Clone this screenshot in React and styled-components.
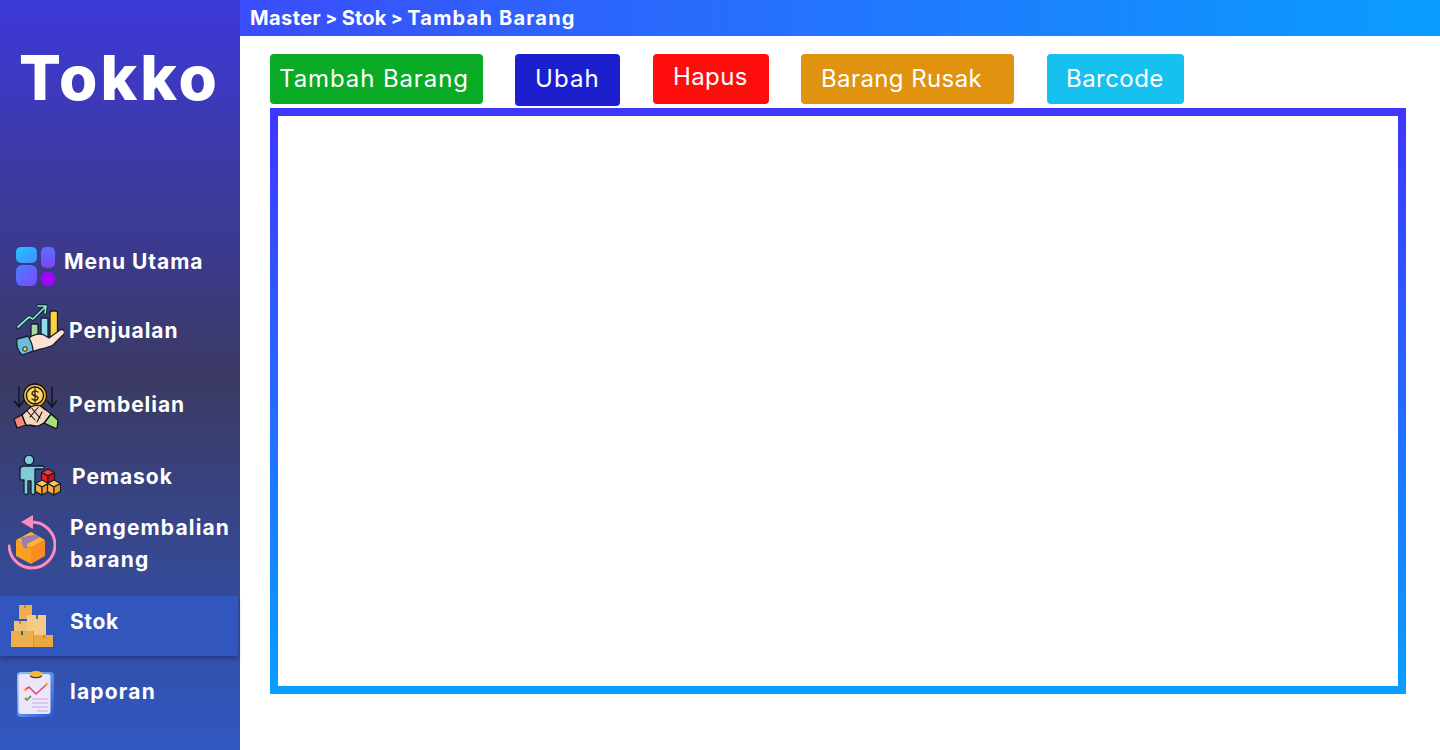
import styled, { createGlobalStyle } from "styled-components";

const GlobalStyle = createGlobalStyle`
  html, body {
    margin: 0;
    padding: 0;
    background: #fff;
    font-family: Inter, "Liberation Sans", sans-serif;
  }
`;

const Page = styled.div`
  display: flex;
  width: 1440px;
  height: 750px;
  overflow: hidden;
`;

const Sidebar = styled.aside`
  flex: 0 0 240px;
  display: flex;
  flex-direction: column;
  background: linear-gradient(180deg, #3d39d8 0%, #3b3a64 51%, #3058c2 100%);
`;

const Logo = styled.div`
  height: 247px;
  padding: 39px 0 0 19px;
  box-sizing: border-box;
  color: #fff;
  font-size: 62px;
  line-height: 78px;
  font-weight: 800;
  letter-spacing: 3px;
`;

const NavItem = styled.div`
  display: flex;
  align-items: center;
  height: ${(p) => p.$height}px;
  margin-top: ${(p) => p.$top || 0}px;
  margin-right: ${(p) => (p.$active ? 2 : 0)}px;
  padding-left: ${(p) => p.$left}px;
  gap: ${(p) => p.$gap}px;
  color: #fff;
  background: ${(p) => (p.$active ? "#3156bd" : "transparent")};
  box-shadow: ${(p) => (p.$active ? "0 3px 4px rgba(20, 30, 80, 0.4)" : "none")};
`;

const NavLabel = styled.span`
  font-size: 21px;
  line-height: 32px;
  font-weight: 700;
  margin-top: ${(p) => p.$shift || 0}px;
  letter-spacing: ${(p) => p.$spacing || 0.95}px;
`;

const Main = styled.main`
  flex: 1;
  display: flex;
  flex-direction: column;
`;

const Breadcrumb = styled.header`
  height: 36px;
  padding-left: 10px;
  display: flex;
  align-items: center;
  color: #fff;
  font-size: 20px;
  font-weight: 700;
  background: linear-gradient(90deg, #3b4dfb 0%, #0a9dff 100%);
`;

const Crumb = styled.span`
  letter-spacing: ${(p) => p.$spacing}px;
`;

const CrumbSep = styled.span`
  font-size: 17px;
  font-weight: 800;
  margin: 0 4.5px;
`;

const Toolbar = styled.div`
  display: flex;
  align-items: flex-start;
  height: 54px;
  padding: 18px 0 0 30px;
`;

const ActionButton = styled.button`
  width: ${(p) => p.$width}px;
  height: ${(p) => p.$height || 50}px;
  margin-left: ${(p) => p.$left || 0}px;
  padding: 0 0 ${(p) => p.$padBottom || 0}px ${(p) => p.$padLeft}px;
  box-sizing: border-box;
  border: none;
  border-radius: 4px;
  background: ${(p) => p.$color};
  color: #fff;
  font-family: inherit;
  font-size: 24px;
  font-weight: 400;
  letter-spacing: ${(p) => p.$spacing}px;
  line-height: 1;
  text-align: left;
`;

const Panel = styled.section`
  width: 1136px;
  height: 586px;
  margin-left: 30px;
  box-sizing: border-box;
  border: 8px solid;
  border-image: linear-gradient(180deg, #3f37fb 0%, #0a9dff 100%) 1;
  background: #fff;
`;

const IconSvg = styled.svg`
  display: block;
  flex: none;
`;

const MenuIcon = () => (
  <IconSvg width="39" height="39" viewBox="0 0 39 39">
    <defs>
      <linearGradient id="mA" x1="0" y1="0" x2="1" y2="1">
        <stop offset="0" stopColor="#27c4ff" />
        <stop offset="1" stopColor="#3f8cff" />
      </linearGradient>
      <linearGradient id="mB" x1="0" y1="0" x2="0" y2="1">
        <stop offset="0" stopColor="#5a70ff" />
        <stop offset="1" stopColor="#7a44f5" />
      </linearGradient>
      <linearGradient id="mC" x1="0" y1="0" x2="1" y2="1">
        <stop offset="0" stopColor="#4a7cff" />
        <stop offset="1" stopColor="#7a4cf8" />
      </linearGradient>
    </defs>
    <rect x="0" y="0" width="21" height="16" rx="5" fill="url(#mA)" />
    <rect x="25" y="0" width="14" height="21" rx="5" fill="url(#mB)" />
    <rect x="0" y="18" width="21" height="21" rx="6" fill="url(#mC)" />
    <rect x="25" y="25" width="14" height="14" rx="6" fill="#a203fb" />
  </IconSvg>
);

const SalesIcon = () => (
  <IconSvg width="48" height="52" viewBox="0 0 48 52">
    <g stroke="#10202c" strokeWidth="1.3" strokeLinejoin="round" strokeLinecap="round">
      <rect x="15" y="20" width="7" height="14" rx="1.5" fill="#a5dc9c" />
      <rect x="25" y="14" width="7" height="21" rx="1.5" fill="#8fdcee" />
      <rect x="34" y="7" width="7.5" height="27" rx="2" fill="#fbd241" />
      <path d="M2 23 L13 13 L17 15 L29 3 M22 2 L30 2 L29 9" fill="none" strokeWidth="3.4" />
      <path d="M12 35 C17 30 24 29 28 31 L33 34 L44 26 C48 24 50 29 47 31 L37 41 C31 45 23 44 16 48 Z" fill="#fde0d6" />
      <path d="M1 35 L12 32 C15 37 17 43 17 47 L6 51 C2 47 0 41 1 35 Z" fill="#6fbbdc" />
    </g>
    <path d="M2 23 L13 13 L17 15 L29 3 M22 2 L30 2 L29 9" fill="none" stroke="#7ff0cc" strokeWidth="1.7" strokeLinecap="round" strokeLinejoin="round" />
    <circle cx="9" cy="45" r="2.2" fill="#fbd85a" stroke="#10202c" strokeWidth="1" />
  </IconSvg>
);

const PurchaseIcon = () => (
  <IconSvg width="46" height="46" viewBox="0 0 46 46">
    <g stroke="#0e1018" strokeWidth="1.3" strokeLinejoin="round" strokeLinecap="round">
      <path d="M6 4 V24 M1.5 18 L6 24 L10.5 18 M39 4 V24 M34.5 18 L39 24 L43.5 18" fill="none" />
      <circle cx="22" cy="12.5" r="11.5" fill="#f2b62e" />
      <circle cx="22" cy="12.5" r="8.5" fill="#fcd968" />
      <path d="M25 9 C23 7.5 19 8 19 10.5 C19 13.5 25 12 25 15 C25 17.5 21 18 19 16 M22 6 V19" fill="none" stroke="#3a2a10" strokeWidth="1.4" />
      <path d="M1 36 L9 32 L13 42 L4 45 Z" fill="#f78a76" />
      <path d="M45 37 L38 31 L31 40 L44 46 Z" fill="#a6de7a" />
      <path d="M9 32 C12 29 14 27 18 24 C22 22 26 22 29 24 C32 27 35 28 38 31 L31 40 C28 41 26 44 22 43 C18 42 15 42 13 42 Z" fill="#f6d6bd" />
      <path d="M14 28 L22 37 M19 25.5 L27 35 M25 24.5 L17 34 M29 29 L24 39" fill="none" strokeWidth="1.1" />
    </g>
  </IconSvg>
);

const Cube = ({ x, y, top, left, right }) => (
  <g transform={`translate(${x} ${y})`} stroke="#10202c" strokeWidth="1.2" strokeLinejoin="round">
    <path d="M0 -7 L6.5 -3.5 L0 0 L-6.5 -3.5 Z" fill={top} />
    <path d="M-6.5 -3.5 L0 0 V8 L-6.5 4.5 Z" fill={left} />
    <path d="M6.5 -3.5 L0 0 V8 L6.5 4.5 Z" fill={right} />
  </g>
);

const SupplierIcon = () => (
  <IconSvg width="42" height="41" viewBox="0 0 42 41">
    <g stroke="#10202c" strokeWidth="1.3" strokeLinejoin="round">
      <circle cx="10" cy="5" r="4.8" fill="#7fcbd8" />
      <path d="M1 15 C1 12 3 11 5 11 H24 C25.5 11 25.5 14 24 14 H16 V38 C16 40 12 40 12 38 V26 H9 V38 C9 40 5 40 5 38 V25 C3 25 1 25 1 24 Z" fill="#7fcbd8" />
    </g>
    <Cube x={29} y={21} top="#f43a3a" left="#ee1c1c" right="#d00f18" />
    <Cube x={23} y={32} top="#ffc65a" left="#fbb13c" right="#f09a25" />
    <Cube x={35} y={32} top="#ffc65a" left="#fbb13c" right="#f09a25" />
  </IconSvg>
);

const ReturnIcon = () => (
  <IconSvg width="48" height="55" viewBox="0 0 48 55">
    <path d="M24 7 C36 7 47 17 47 30 C47 43 36 53 24 53 C12 53 2 44 1 31" fill="none" stroke="#fd8bbf" strokeWidth="3" strokeLinecap="round" />
    <path d="M13 7 L25 0 L25 14 Z" fill="#fd8bbf" />
    <path d="M8 25 L23 17 L37 25 L23 33 Z" fill="#ffb038" />
    <path d="M8 25 L23 33 V49 L8 41 Z" fill="#f9a021" />
    <path d="M37 25 L23 33 V49 L37 41 Z" fill="#fb8c1f" />
    <path d="M13 22.5 L27 19.5 L32 22 L19 29 V34 L15 32 Z" fill="#9a7cb0" />
  </IconSvg>
);

const StockIcon = () => (
  <IconSvg width="42" height="42" viewBox="0 0 42 42">
    <rect x="8" y="0" width="13" height="14" fill="#eeb04f" />
    <rect x="3" y="16" width="13" height="10" fill="#f1c077" />
    <rect x="16" y="10" width="19" height="20" fill="#f3ca86" />
    <rect x="0" y="26" width="22" height="16" fill="#edae4d" />
    <rect x="22" y="30" width="20" height="12" fill="#e9a843" />
    <rect x="22" y="26" width="1" height="16" fill="#d8953a" />
    <rect x="13" y="0" width="2" height="3" fill="#e2785a" />
    <rect x="8" y="16" width="2" height="3" fill="#e2785a" />
    <rect x="25" y="10" width="2" height="4" fill="#3f7a86" />
    <rect x="10" y="26" width="2" height="4" fill="#2f6a78" />
    <rect x="32" y="30" width="2" height="3" fill="#e2785a" />
  </IconSvg>
);

const ReportIcon = () => (
  <IconSvg width="38" height="46" viewBox="0 0 38 46">
    <defs>
      <linearGradient id="rA" x1="0" y1="0" x2="1" y2="1">
        <stop offset="0" stopColor="#8fc4fb" />
        <stop offset="1" stopColor="#2a55d8" />
      </linearGradient>
    </defs>
    <rect x="0" y="1" width="37" height="45" rx="4" fill="url(#rA)" />
    <rect x="1.5" y="3" width="32" height="40" rx="3" fill="#ece6fa" />
    <path d="M13 5 V3 H25 V5 C25 8 13 8 13 5 Z" fill="#3a3550" />
    <ellipse cx="19" cy="3" rx="7" ry="3" fill="#f6b93b" />
    <path d="M8 19 L12 16 L19 23 L30 13" fill="none" stroke="#ec4569" strokeWidth="1.6" strokeLinecap="round" strokeLinejoin="round" />
    <circle cx="8" cy="19" r="1.4" fill="#f6b93b" />
    <circle cx="30" cy="13" r="1.4" fill="#f6b93b" />
    <path d="M8 27 L10 29 L14 25" fill="none" stroke="#6f9e3a" strokeWidth="1.8" />
    <path d="M15 28 H31 M15 32 H31 M15 36 H31 M20 40 H31" stroke="#c7a8dc" strokeWidth="1" />
  </IconSvg>
);

const navItems = [
  { label: "Menu Utama", icon: <MenuIcon />, height: 39, left: 16, gap: 9, shift: -9 },
  { label: "Penjualan", icon: <SalesIcon />, top: 18, height: 52, left: 16, gap: 5, shift: 2 },
  { label: "Pembelian", icon: <PurchaseIcon />, top: 27, height: 46, left: 13, gap: 10, shift: -2 },
  { label: "Pemasok", icon: <SupplierIcon />, top: 26, height: 41, left: 19, gap: 11, shift: 3 },
  { label: <>Pengembalian<br />barang</>, icon: <ReturnIcon />, top: 19, height: 55, left: 8, gap: 14, shift: 3, spacing: 1.15 },
  { label: "Stok", icon: <StockIcon />, top: 26, height: 60, left: 11, gap: 17, shift: -8, active: true, spacing: 0.6 },
  { label: "laporan", icon: <ReportIcon />, top: 15, height: 46, left: 17, gap: 15, shift: -4, spacing: 1.2 },
];

const actions = [
  { label: "Tambah Barang", color: "#0aab26", width: 213, padLeft: 9, spacing: 0.9 },
  { label: "Ubah", color: "#1c1fce", width: 105, height: 52, left: 32, padLeft: 20, padBottom: 2, spacing: 1.1 },
  { label: "Hapus", color: "#ff0d0d", width: 116, left: 33, padLeft: 20, padBottom: 5, spacing: 0.4 },
  { label: "Barang Rusak", color: "#e1930f", width: 213, left: 32, padLeft: 20, spacing: 0.4 },
  { label: "Barcode", color: "#17c1ef", width: 137, left: 33, padLeft: 19, spacing: 0.45 },
];

export default function App() {
  return (
    <Page>
      <GlobalStyle />
      <Sidebar>
        <Logo>Tokko</Logo>
        {navItems.map((item, i) => (
          <NavItem key={i} $top={item.top} $height={item.height} $left={item.left} $gap={item.gap} $active={item.active}>
            {item.icon}
            <NavLabel $shift={item.shift} $spacing={item.spacing}>{item.label}</NavLabel>
          </NavItem>
        ))}
      </Sidebar>
      <Main>
        <Breadcrumb>
          <Crumb $spacing={0.4}>Master</Crumb>
          <CrumbSep>&gt;</CrumbSep>
          <Crumb $spacing={0.2}>Stok</Crumb>
          <CrumbSep>&gt;</CrumbSep>
          <Crumb $spacing={1.2}>Tambah Barang</Crumb>
        </Breadcrumb>
        <Toolbar>
          {actions.map((a) => (
            <ActionButton key={a.label} $color={a.color} $width={a.width} $height={a.height} $left={a.left} $padLeft={a.padLeft} $padBottom={a.padBottom} $spacing={a.spacing}>
              {a.label}
            </ActionButton>
          ))}
        </Toolbar>
        <Panel />
      </Main>
    </Page>
  );
}
